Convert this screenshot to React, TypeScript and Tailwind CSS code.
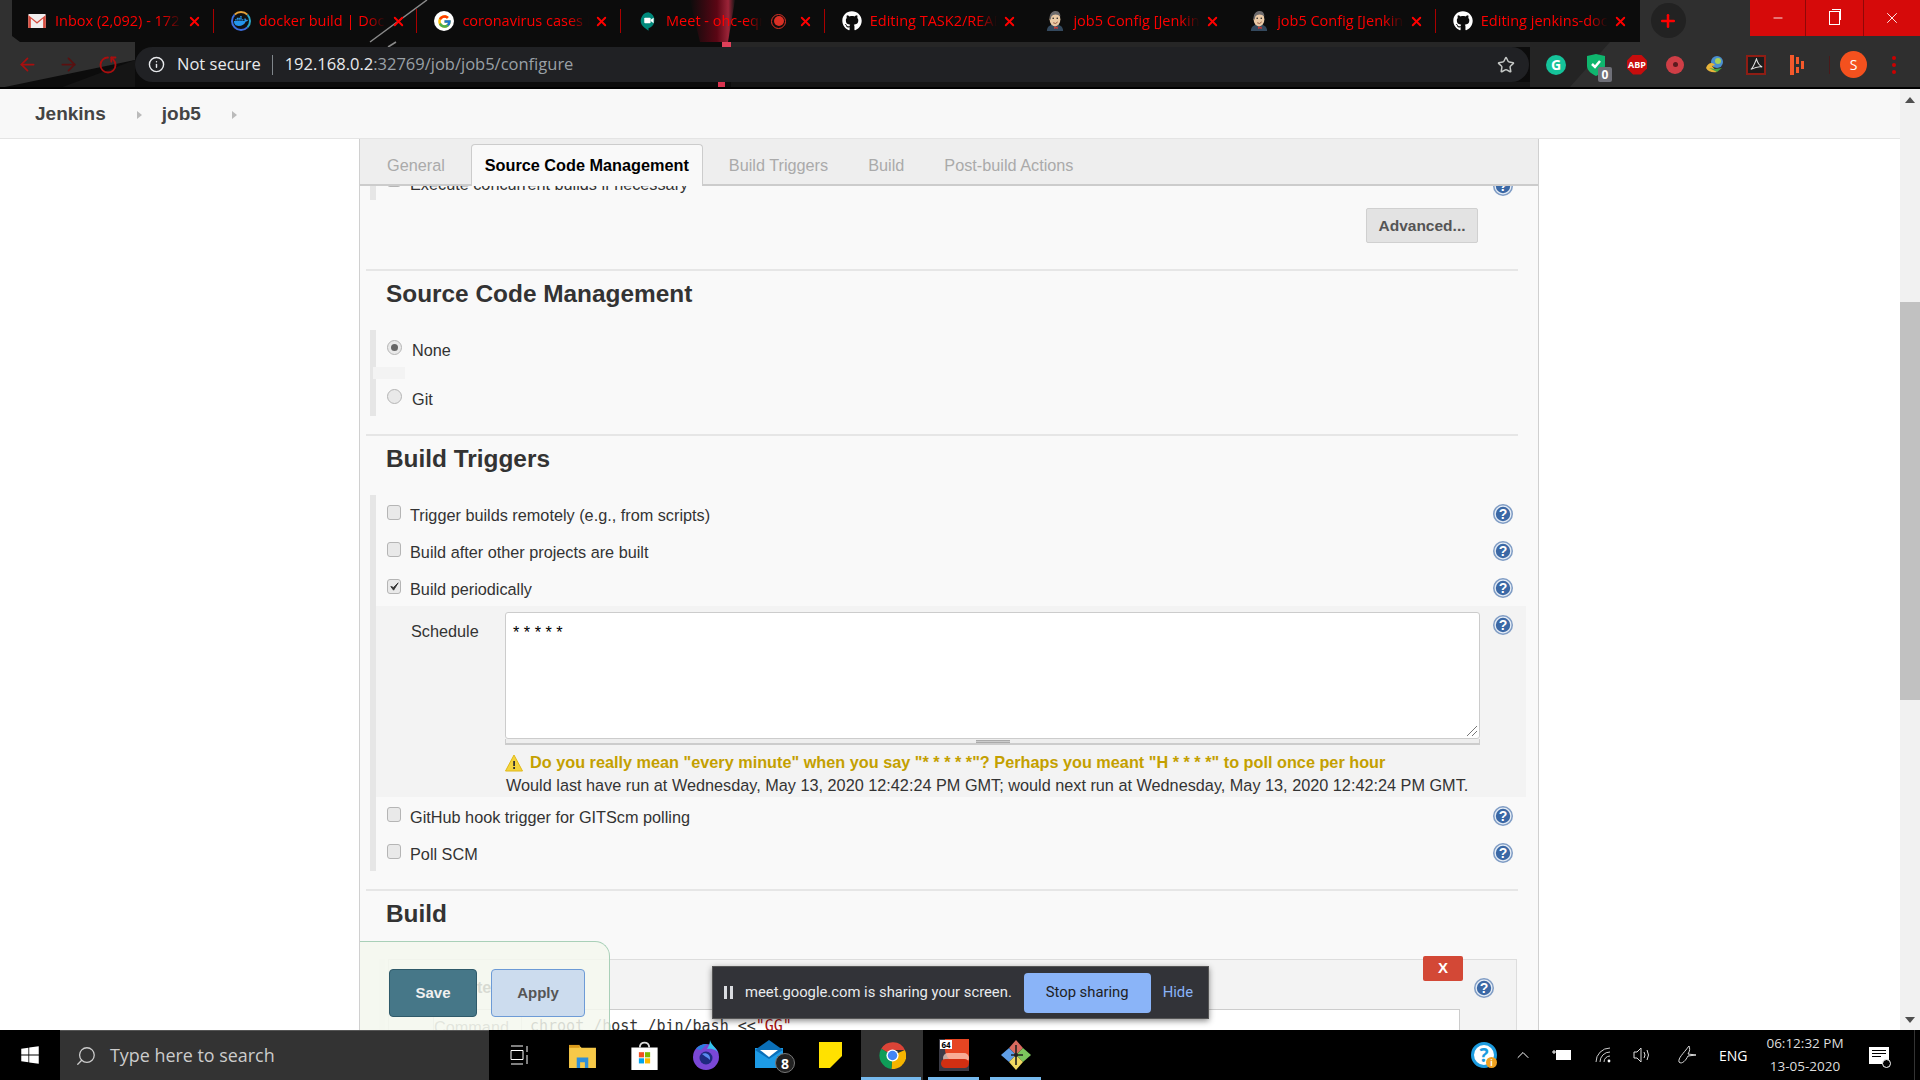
import React from 'react'
import { FaGithub, FaDocker, FaWindows } from 'react-icons/fa'
import { FcGoogle } from 'react-icons/fc'
import { ArrowLeft, ArrowRight, RotateCw, Info, Star, Search, ChevronUp, Plus, Minus, X } from 'lucide-react'

const Gmail = () => (
    <svg viewBox="0 0 20 16" className="w-[18px] h-[14px]">
        <rect x="0" y="0" width="20" height="16" rx="1" fill="#f1eeee" />
        <path d="M0 1 L10 9 L20 1 V16 H17 V5 L10 11 L3 5 V16 H0 Z" fill="#d54c3f" />
    </svg>
)

const Docker = () => (
    <div className="w-[20px] h-[20px] rounded-full border-2 border-[#3d6fe0] border-t-[#e5a33a] border-r-[#2aa7c9] bg-[#111] flex items-center justify-center">
        <FaDocker className="text-[#2496ed] size-[14px]" />
    </div>
)

const Google = () => (
    <div className="w-[20px] h-[20px] rounded-full bg-white flex items-center justify-center">
        <FcGoogle className="size-[15px]" />
    </div>
)

const Meet = () => (
    <svg viewBox="0 0 20 22" className="w-[17px] h-[19px]">
        <path d="M10 0 A10 10 0 0 1 10 19 L10 22 L5 18 A10 10 0 0 1 10 0 Z" fill="#00897b" />
        <rect x="5" y="6.5" width="7.5" height="6.5" rx="1" fill="#fff" />
        <path d="M12.5 9 L16 6.5 V13 L12.5 10.5 Z" fill="#fff" />
    </svg>
)

const JenkinsFace = () => (
    <svg viewBox="0 0 20 22" className="w-[18px] h-[20px]">
        <path d="M1 22 C1 17 5 15 10 15 C15 15 19 17 19 22 Z" fill="#34495e" />
        <ellipse cx="10" cy="9" rx="6" ry="8" fill="#eac9a5" />
        <path d="M4 8 C4 2 8 0 11 0 C15 0 16 4 16 6 C13 3 8 3 6 6 L5 10 Z" fill="#6d6b6d" />
        <circle cx="8" cy="8" r="0.9" fill="#222" />
        <circle cx="12.5" cy="8" r="0.9" fill="#222" />
        <path d="M8 13 Q11 15 13 12" stroke="#8a4b36" strokeWidth="1" fill="none" />
        <path d="M9 17 L11 18 L13 17 V20 L11 19 L9 20 Z" fill="#d33833" />
    </svg>
)

const tabs = [
    { title: 'Inbox (2,092) - 172', icon: <Gmail />, sep: true },
    { title: 'docker build | Docker', icon: <Docker />, sep: true },
    { title: 'coronavirus cases in', icon: <Google />, sep: true },
    { title: 'Meet - ohc-eqnx', icon: <Meet />, sep: true, rec: true },
    { title: 'Editing TASK2/README', icon: <FaGithub className="text-white size-[20px]" />, sep: false },
    { title: 'job5 Config [Jenkins]', icon: <JenkinsFace />, sep: false },
    { title: 'job5 Config [Jenkins]', icon: <JenkinsFace />, sep: true },
    { title: 'Editing jenkins-docker', icon: <FaGithub className="text-white size-[20px]" />, sep: false },
]

const Theme = () => (
    <svg viewBox="0 0 1920 89" className="absolute inset-0 w-[1920px] h-[89px]">
        <defs>
            <linearGradient id="streak" x1="0" x2="1" y1="0" y2="0">
                <stop offset="0" stopColor="#0c0c0c" />
                <stop offset="0.6" stopColor="#5a0614" />
                <stop offset="0.85" stopColor="#9c2438" />
                <stop offset="1" stopColor="#141414" />
            </linearGradient>
        </defs>
        <rect width="1920" height="89" fill="#0c0c0c" />
        <polygon points="0,0 12,0 12,36 20,42 135,42 135,60 0,88" fill="#303030" />
        <polygon points="60,88 135,60 135,88" fill="#151515" />
        <polygon points="690,0 735,0 728,42 700,42" fill="url(#streak)" />
        <rect x="722" y="42" width="9" height="5" fill="#e0405a" />
        <rect x="718" y="82" width="7" height="5" fill="#d8334f" />
        <rect x="731" y="42" width="800" height="5" fill="#262626" />
        <rect x="731" y="82" width="800" height="5" fill="#151515" />
        <line x1="427" y1="0" x2="370" y2="42" stroke="#8a8a8a" strokeWidth="1.5" />
        <line x1="396" y1="42" x2="388" y2="47" stroke="#8a8a8a" strokeWidth="1.5" />
        <polygon points="1640,0 1920,0 1920,87 1530,87 1530,42 1640,42" fill="#2f2f2f" />
        <polygon points="1530,42 1610,42 1570,87 1530,87" fill="#242424" />
        <rect y="87" width="1920" height="2" fill="#000" />
    </svg>
)

const Tab = ({ t }: { t: (typeof tabs)[number] }) => (
    <div className="w-[203.7px] h-[42px] shrink-0 flex items-center pl-[17px] relative">
        <div className="w-[20px] flex justify-center shrink-0">{t.icon}</div>
        <span className={`ml-[8px] whitespace-nowrap overflow-hidden text-[14.5px] text-[#f00] [mask-image:linear-gradient(to_right,black_84%,transparent)] ${t.rec ? 'w-[96px]' : 'w-[127px]'}`}>
            {t.title}
        </span>
        {t.rec && (
            <span className="absolute left-[150px] w-[15px] h-[15px] rounded-full border border-[#d93025] flex items-center justify-center">
                <span className="w-[10px] h-[10px] rounded-full bg-[#d93025]" />
            </span>
        )}
        <X className="absolute left-[177px] size-[15px] text-[#f00]" strokeWidth={3} />
        {t.sep && <div className="absolute right-0 top-[9px] h-[24px] w-px bg-[#a00]" />}
    </div>
)

const ToolIcons = () => (
    <div className="flex items-center h-full">
        <div className="w-[20px] h-[20px] rounded-full bg-[#15c39a] text-white text-[14px] font-bold flex items-center justify-center ml-[17px]">G</div>
        <div className="relative ml-[20px] w-[20px] h-[22px]">
            <svg viewBox="0 0 20 22" className="size-full">
                <path d="M1 2 L10 0 L19 2 V12 C19 17 14 20 10 22 C6 20 1 17 1 12 Z" fill="#0fb66e" />
                <path d="M6 10 L9 13 L14 7" stroke="#fff" strokeWidth="2.5" fill="none" />
            </svg>
            <span className="absolute left-[12px] top-[13px] w-[14px] h-[15px] rounded-[2px] bg-[#6f7078] text-white text-[12px] font-bold leading-[15px] text-center">0</span>
        </div>
        <div className="ml-[21px] w-[20px] h-[20px] bg-[#c70d0d] [clip-path:polygon(30%_0,70%_0,100%_30%,100%_70%,70%_100%,30%_100%,0_70%,0_30%)] text-white text-[9px] font-bold flex items-center justify-center">ABP</div>
        <div className="ml-[19px] w-[18px] h-[18px] rounded-full bg-[#cf3e46] flex items-center justify-center">
            <span className="w-[5px] h-[5px] rounded-full bg-[#5c1a1e]" />
        </div>
        <svg viewBox="0 0 20 20" className="ml-[21px] w-[20px] h-[20px]">
            <circle cx="12" cy="7" r="6" fill="#4a8fd0" />
            <circle cx="13" cy="6" r="3" fill="#a6d05a" />
            <path d="M1 13 C3 7 8 7 10 10 L7 11 L12 17 C8 18 3 17 1 13 Z" fill="#e8b43a" />
            <path d="M4 13 L12 17 L17 13 L10 14 Z" fill="#4aa544" />
        </svg>
        <div className="ml-[21px] w-[20px] h-[20px] bg-[#1d1d1d] border-2 border-[#8f1d14] flex items-center justify-center">
            <svg viewBox="0 0 16 16" className="size-[13px]">
                <path d="M8 1 C6 6 4 12 1 14 C5 12 11 10 15 11 C11 9 9 5 8 1 Z" stroke="#ddd" strokeWidth="1.3" fill="none" />
            </svg>
        </div>
        <svg viewBox="0 0 14 20" className="ml-[24px] w-[14px] h-[20px]">
            <rect x="0" y="0" width="4" height="20" fill="#f4592b" />
            <rect x="6" y="2" width="3" height="7" fill="#f4592b" />
            <rect x="6" y="12" width="3" height="6" fill="#f4592b" />
            <rect x="11" y="6" width="3" height="8" fill="#f4592b" />
        </svg>
        <div className="ml-[25px] w-px h-[18px] bg-[#4a1a1a]" />
        <div className="ml-[10px] w-[27px] h-[27px] rounded-full bg-[#f4511e] text-white text-[14px] flex items-center justify-center">S</div>
        <div className="ml-[25px] flex flex-col gap-[3px]">
            <span className="w-[4px] h-[4px] rounded-full bg-[#c00]" />
            <span className="w-[4px] h-[4px] rounded-full bg-[#c00]" />
            <span className="w-[4px] h-[4px] rounded-full bg-[#c00]" />
        </div>
    </div>
)

const BrowserChrome = () => (
    <header className="relative h-[89px] shrink-0 overflow-hidden font-['Open_Sans',sans-serif]">
        <Theme />
        <div className="relative flex h-[42px] pl-[10px]">
            {tabs.map((t, i) => <Tab key={i} t={t} />)}
            <div className="ml-[11px] mt-[3px] w-[35px] h-[35px] rounded-full bg-[#222] flex items-center justify-center">
                <Plus className="size-[20px] text-[#f00]" strokeWidth={3} />
            </div>
            <div className="ml-auto flex h-[36px] bg-[#d60a0a] text-white">
                <div className="w-[56px] flex items-center justify-center border-r border-[#8f0808]"><Minus className="size-[14px]" strokeWidth={1.5} /></div>
                <div className="w-[58px] flex items-center justify-center border-r border-[#8f0808]">
                    <div className="w-[11px] h-[14px] border border-white relative">
                        <div className="absolute left-[2px] top-[-3px] w-[9px] h-[11px] border-t border-r border-white" />
                    </div>
                </div>
                <div className="w-[56px] flex items-center justify-center"><X className="size-[18px]" strokeWidth={1.2} /></div>
            </div>
        </div>
        <div className="relative flex h-[45px] items-center">
            <ArrowLeft className="ml-[17px] size-[21px] text-[#a80f0f]" strokeWidth={2} />
            <ArrowRight className="ml-[20px] size-[21px] text-[#5a1010]" strokeWidth={2} />
            <RotateCw className="ml-[19px] size-[20px] text-[#a80f0f] scale-x-[-1] rotate-90" strokeWidth={2.2} />
            <div className="ml-[17px] w-[1394px] h-[35px] rounded-full bg-[#202124] flex items-center text-[16.5px]">
                <Info className="ml-[13px] size-[17px] text-[#e8eaed]" strokeWidth={2} />
                <span className="ml-[12px] text-[#e8eaed]">Not secure</span>
                <div className="ml-[11px] w-px h-[20px] bg-[#80868b]" />
                <span className="ml-[12px] text-[#e8eaed]">192.168.0.2</span>
                <span className="text-[#9aa0a6]">:32769/job/job5/configure</span>
                <Star className="ml-auto mr-[14px] size-[18px] text-[#c4c7c5]" strokeWidth={2} />
            </div>
            <ToolIcons />
        </div>
    </header>
)

const Breadcrumbs = () => (
    <div className="h-[50px] shrink-0 bg-[#f8f8f8] border-b border-[#e4e4e4] flex items-center pl-[35px] pt-[2px] text-[19px] font-bold text-[#444]">
        <span>Jenkins</span>
        <span className="ml-[31px] w-0 h-0 border-y-[4px] border-y-transparent border-l-[5px] border-l-[#bbb]" />
        <span className="ml-[20px]">job5</span>
        <span className="ml-[31px] w-0 h-0 border-y-[4px] border-y-transparent border-l-[5px] border-l-[#bbb]" />
    </div>
)

const Help = ({ className }: { className?: string }) => (
    <svg viewBox="0 0 20 20" className={`w-[20px] h-[20px] shrink-0 ${className ?? ''}`}>
        <circle cx="10" cy="10" r="10" fill="#7f9cc4" />
        <circle cx="10" cy="10" r="8.5" fill="#e6edf6" />
        <circle cx="10" cy="10" r="7.2" fill="#3b68a5" />
        <text x="10" y="15" textAnchor="middle" fontSize="14" fontWeight="bold" fill="#fff" fontFamily="Liberation Sans">?</text>
    </svg>
)

const Check = ({ checked }: { checked?: boolean }) => (
    <span className="w-[14px] h-[15px] shrink-0 rounded-[3px] border border-[#b5b5b5] bg-[#e9e9e9] flex items-center justify-center mb-[3px]">
        {checked && (
            <svg viewBox="0 0 12 12" className="size-[11px]">
                <path d="M2 6 L5 10 L10 2 L5 7 Z" fill="#333" stroke="#333" strokeWidth="1" />
            </svg>
        )}
    </span>
)

const Radio = ({ checked }: { checked?: boolean }) => (
    <span className="w-[15px] h-[15px] shrink-0 rounded-full border border-[#b5b5b5] bg-[#e9e9e9] flex items-center justify-center mb-[3px]">
        {checked && <span className="w-[7px] h-[7px] rounded-full bg-[#666]" />}
    </span>
)

const CheckRow = ({ label, checked }: { label: string; checked?: boolean }) => (
    <div className="h-[37px] pl-[11px] pr-[13px] flex items-center">
        <Check checked={checked} />
        <span className="ml-[9px] mt-[4px]">{label}</span>
        <Help className="ml-auto" />
    </div>
)

const Divider = ({ className }: { className: string }) => (
    <div className={`ml-[6px] w-[1152px] h-[2px] bg-[#e6e6e6] ${className}`} />
)

const Heading = ({ children }: { children: string }) => (
    <h2 className="h-[46px] pl-[26px] flex items-center text-[24.4px] font-bold text-[#333]">{children}</h2>
)

const Schedule = () => (
    <div className="h-[191px] bg-[#f3f3f3] flex pt-[6px] pr-[13px]">
        <span className="w-[129px] pl-[35px] pt-[7px] shrink-0">Schedule</span>
        <div className="w-[975px] shrink-0">
            <div className="relative h-[127px] bg-white border border-[#ccc] rounded-[3px] pl-[7px] pt-[7px] text-black">* * * * *
                <svg viewBox="0 0 12 12" className="absolute right-[1px] bottom-[1px] size-[12px]">
                    <path d="M1 11 L11 1 M6 11 L11 6" stroke="#777" strokeWidth="1" />
                </svg>
            </div>
            <div className="h-[6px] bg-[#eee] border-b-2 border-x border-[#ccc] flex justify-center">
                <div className="w-[34px] h-[3px] mt-px border-y border-[#aaa] bg-[#ccc]" />
            </div>
            <div className="mt-[6px] h-[23px] flex items-center font-bold text-[#c4a000]">
                <svg viewBox="0 0 18 18" className="w-[18px] h-[18px] shrink-0">
                    <path d="M9 1 L17.5 17 H0.5 Z" fill="#f4d43c" stroke="#e0b818" strokeWidth="1" strokeLinejoin="round" />
                    <rect x="8.2" y="7" width="1.8" height="5" fill="#333" />
                    <rect x="8.2" y="13" width="1.8" height="2" fill="#333" />
                </svg>
                <span className="ml-[7px]">Do you really mean "every minute" when you say "* * * * *"? Perhaps you meant "H * * * *" to poll once per hour</span>
            </div>
            <div className="h-[23px] pl-px flex items-center whitespace-nowrap">
                Would last have run at Wednesday, May 13, 2020 12:42:24 PM GMT; would next run at Wednesday, May 13, 2020 12:42:24 PM GMT.
            </div>
        </div>
        <Help className="ml-auto mt-[3px]" />
    </div>
)

const BuildStep = () => (
    <div className="mt-[22px] ml-[19px] flex">
        <div className="w-[6px] h-[80px] bg-[#eee] shrink-0" />
        <div className="relative ml-[3px] w-[1129px] h-[80px] bg-[#f3f3f3] border border-[#ddd]">
            <div className="pl-[40px] pt-[15px] h-[49px] font-bold text-[#333]">Execute shell</div>
            <div className="ml-[44px] w-[1027px] h-[40px] bg-white border border-[#ccc] flex items-start pt-[5px]">
                <span className="w-[87px] shrink-0 text-[#777]">Command</span>
                <span className="h-full -mt-[5px] pt-[5px] pl-[8px] border-l border-[#ddd] font-['DejaVu_Sans_Mono',monospace] text-[15px] whitespace-nowrap text-[#333]">
                    chroot /host /bin/bash &lt;&lt;<span className="text-[#a11]">"GG"</span>
                </span>
            </div>
            <button className="absolute left-[1034px] top-[-4px] w-[40px] h-[25px] rounded-[2px] bg-[#d34836] text-white font-bold text-[15px]">X</button>
            <Help className="absolute left-[1085px] top-[18px]" />
        </div>
    </div>
)

const Panel = () => (
    <section className="w-[1180px] h-[891px] shrink-0 border-x border-[#d0d0d0] bg-[#f9f9f9] overflow-hidden text-[16.25px] text-[#333]">
        <div className="relative z-10 h-[47px] bg-[#eee] border-b-2 border-[#ccc] flex items-end pl-[27px] text-[#aaa]">
            <span className="h-[45px] pt-[7px] flex items-center">General</span>
            <span className="ml-[26px] w-[232px] h-[42px] mb-[-2px] flex items-center justify-center rounded-t-[4px] bg-[#f9f9f9] border border-b-0 border-[#ccc] font-bold text-black">Source Code Management</span>
            <span className="ml-[26px] h-[45px] pt-[7px] flex items-center">Build Triggers</span>
            <span className="ml-[40px] h-[45px] pt-[7px] flex items-center">Build</span>
            <span className="ml-[40px] h-[45px] pt-[7px] flex items-center">Post-build Actions</span>
        </div>
        <div className="ml-[10px] w-[1156px] h-[14px] border-l-[6px] border-[#e6e6e6] pl-[11px] pr-[13px] flex">
            <div className="flex h-[37px] -mt-[14px] items-start">
                <Check />
                <span className="ml-[9px]">Execute concurrent builds if necessary</span>
            </div>
            <Help className="ml-auto -mt-[10px]" />
        </div>
        <div className="mt-[8px] ml-[1006px] w-[112px] h-[35px] rounded-[2px] bg-[#e3e3e3] border border-[#d0d0d0] flex items-center justify-center font-bold text-[15.5px] text-[#555]">Advanced...</div>
        <Divider className="mt-[26px]" />
        <Heading>Source Code Management</Heading>
        <div className="mt-[13px] ml-[10px] w-[1156px] border-l-[6px] border-[#e6e6e6]">
            <div className="h-[37px] pl-[11px] flex items-center">
                <Radio checked />
                <span className="ml-[10px] mt-[4px]">None</span>
            </div>
            <div className="h-[12px] w-[32px] -ml-[3px] bg-[#f3f3f3]" />
            <div className="h-[37px] pl-[11px] flex items-center">
                <Radio />
                <span className="ml-[10px] mt-[4px]">Git</span>
            </div>
        </div>
        <Divider className="mt-[18px]" />
        <Heading>Build Triggers</Heading>
        <div className="mt-[13px] ml-[10px] w-[1156px] border-l-[6px] border-[#e6e6e6]">
            <CheckRow label="Trigger builds remotely (e.g., from scripts)" />
            <CheckRow label="Build after other projects are built" />
            <CheckRow label="Build periodically" checked />
            <Schedule />
            <CheckRow label="GitHub hook trigger for GITScm polling" />
            <CheckRow label="Poll SCM" />
        </div>
        <Divider className="mt-[18px]" />
        <Heading>Build</Heading>
        <BuildStep />
    </section>
)

const SaveBar = () => (
    <div className="absolute left-[360px] bottom-0 w-[250px] h-[89px] z-20 rounded-tr-[15px] border-t border-r border-[#a9d0b8] bg-[#f4f8ee]/85 flex items-start pt-[27px] pl-[29px] gap-[14px] font-bold text-[15px]">
        <button className="w-[88px] h-[48px] rounded-[4px] bg-[#467788] border border-[#2f5a6a] text-[#f0f0f0]">Save</button>
        <button className="w-[94px] h-[48px] rounded-[4px] bg-[#ccdcee] border border-[#6d9bd6] text-[#555]">Apply</button>
    </div>
)

const SharingBar = () => (
    <div className="absolute left-[712px] top-[827px] w-[497px] h-[53px] z-20 bg-[#323338] shadow-[0_2px_6px_rgba(0,0,0,0.45)] border border-[#555] flex items-center font-['Roboto',sans-serif] text-[14.8px] text-[#e8eaed]">
        <span className="ml-[11px] w-[3px] h-[13px] bg-[#dadce0]" />
        <span className="ml-[3px] w-[3px] h-[13px] bg-[#dadce0]" />
        <span className="ml-[12px]">meet.google.com is sharing your screen.</span>
        <span className="ml-auto w-[127px] h-[40px] rounded-[4px] bg-[#8ab4f8] text-[#202124] flex items-center justify-center">Stop sharing</span>
        <span className="ml-[12px] mr-[15px] text-[#8ab4f8]">Hide</span>
    </div>
)

const Scrollbar = () => (
    <div className="w-[20px] h-full bg-[#f1f1f1] shrink-0 flex flex-col items-center">
        <span className="mt-[8px] w-0 h-0 border-x-[5px] border-x-transparent border-b-[6px] border-b-[#505050]" />
        <div className="mt-[199px] w-full h-[398px] bg-[#c1c1c1]" />
        <span className="mt-auto mb-[7px] w-0 h-0 border-x-[5px] border-x-transparent border-t-[6px] border-t-[#505050]" />
    </div>
)

const Chrome = () => (
    <svg viewBox="0 0 24 24" className="w-[27px] h-[27px]">
        <path d="M12 12 L2 6 A12 12 0 0 1 23 7 H12 Z" fill="#db4437" />
        <path d="M12 12 L23 7 A12 12 0 0 1 11 24 Z" fill="#f4b400" />
        <path d="M12 12 L11 24 A12 12 0 0 1 2 6 Z" fill="#0f9d58" />
        <circle cx="12" cy="12" r="5.4" fill="#fff" />
        <circle cx="12" cy="12" r="4.2" fill="#4285f4" />
    </svg>
)

const TaskCell = ({ children, active, underline }: { children: React.ReactNode; active?: boolean; underline?: boolean }) => (
    <div className={`relative w-[62px] h-full shrink-0 flex items-center justify-center ${active ? 'bg-[#333]' : ''}`}>
        {children}
        {underline && <div className={`absolute bottom-0 h-[3px] bg-[#76b9ed] ${active ? 'left-0 w-[60px]' : 'left-[5px] w-[51px]'}`} />}
    </div>
)

const Taskbar = () => (
    <footer className="h-[50px] shrink-0 bg-black flex items-center font-['Open_Sans',sans-serif] text-white relative z-30">
        <div className="w-[60px] h-full flex items-center justify-center">
            <FaWindows className="size-[20px]" />
        </div>
        <div className="w-[429px] h-full bg-[#333] border-t border-[#555] flex items-center pl-[15px] text-[#ccc]">
            <Search className="size-[22px] scale-x-[-1]" strokeWidth={1.4} />
            <span className="ml-[13px] text-[17.9px]">Type here to search</span>
        </div>
        <TaskCell>
            <svg viewBox="0 0 20 20" className="size-[20px]" stroke="#fff" fill="none">
                <path d="M1 1 H13 M1 5.5 V14.5 H13 V5.5 Z M1 19 H13 M17 1 V7 M17 10 V19" />
            </svg>
        </TaskCell>
        <TaskCell>
            <svg viewBox="0 0 28 26" className="w-[27px] h-[25px]">
                <path d="M0 2 H10 L13 5 H28 V26 H0 Z" fill="#f7c948" />
                <rect y="2" width="11" height="3" fill="#d99a1c" />
                <path d="M8 26 V15 H20 V26 H16.5 V20 H11.5 V26 Z" fill="#2f8fd8" />
            </svg>
        </TaskCell>
        <TaskCell>
            <svg viewBox="0 0 28 32" className="w-[27px] h-[30px]">
                <path d="M0 8 H28 V32 H0 Z" fill="#fff" />
                <path d="M9 8 C9 1 19 1 19 8" stroke="#ddd" strokeWidth="2" fill="none" />
                <rect x="8" y="13" width="5.5" height="5.5" fill="#f25022" />
                <rect x="14.5" y="13" width="5.5" height="5.5" fill="#7fba00" />
                <rect x="8" y="19.5" width="5.5" height="5.5" fill="#00a4ef" />
                <rect x="14.5" y="19.5" width="5.5" height="5.5" fill="#ffb900" />
            </svg>
        </TaskCell>
        <TaskCell>
            <svg viewBox="0 0 28 30" className="w-[28px] h-[30px]">
                <circle cx="14" cy="17" r="13" fill="#7a47d6" />
                <path d="M18 0 C19 5 25 8 27 15 C26 10 20 8 15 9 C17 6 18 3 18 0 Z" fill="#35c5ef" />
                <path d="M4 9 C8 4 13 4 15 4 L9 10 Z" fill="#2a7fe0" />
                <circle cx="14" cy="18" r="6.5" fill="#1f2a80" />
                <path d="M10 14 C14 12 19 15 18 20 C15 17 12 16 10 14 Z" fill="#5a8cf0" />
            </svg>
        </TaskCell>
        <TaskCell>
            <div className="relative ml-[14px] w-[40px] h-[30px]">
                <svg viewBox="0 0 28 28" className="w-[28px] h-[28px]">
                    <rect y="8" width="28" height="20" fill="#1d9be6" />
                    <path d="M0 10 L14 0 L28 10 L14 19 Z" fill="#0a6fb8" />
                    <path d="M5 10 H23 L14 17 Z" fill="#fff" />
                </svg>
                <span className="absolute right-0 bottom-[-3px] w-[20px] h-[20px] rounded-full bg-[#222] border border-[#777] text-[14px] font-bold flex items-center justify-center">8</span>
            </div>
        </TaskCell>
        <TaskCell>
            <div className="w-[23px] h-[26px] bg-[#ffe100] relative">
                <div className="absolute right-0 bottom-0 w-0 h-0 border-l-[12px] border-l-transparent border-b-[12px] border-b-black" />
            </div>
        </TaskCell>
        <TaskCell active underline><Chrome /></TaskCell>
        <TaskCell underline>
            <div className="relative w-[30px] h-[32px] bg-[#3b3b46] overflow-hidden">
                <div className="absolute right-0 top-0 w-[24px] h-[24px] rounded-bl-[14px] bg-[#e64522]" />
                <div className="absolute left-[4px] top-[14px] w-[26px] h-[10px] rounded-full bg-[#ffd9c7]/70" />
                <div className="absolute left-[2px] top-[20px] w-[28px] h-[9px] rounded-full bg-[#d22f12]" />
                <span className="absolute left-[1px] top-[1px] w-[12px] h-[9px] bg-white text-black text-[8px] font-bold leading-[9px] text-center">64</span>
            </div>
        </TaskCell>
        <TaskCell underline>
            <svg viewBox="0 0 30 30" className="w-[30px] h-[30px]">
                <path d="M15 0 L22 8 L15 15 L8 8 Z" fill="#d96a5e" />
                <path d="M8 8 L15 15 L8 22 L0 15 Z" fill="#5f9ee6" />
                <path d="M22 8 L30 15 L22 22 L15 15 Z" fill="#7cc75e" />
                <path d="M8 22 L15 15 L22 22 L15 30 Z" fill="#f0d860" />
                <path d="M15 5 V25 M10 15 H22" stroke="#222" strokeWidth="1.6" />
                <circle cx="15" cy="15" r="2" fill="#222" />
            </svg>
        </TaskCell>
        <div className="ml-auto flex items-center h-full">
            <div className="relative w-[26px] h-[26px] rounded-full bg-white border-[3px] border-[#1c9ce0] flex items-center justify-center text-[#1c9ce0] text-[19px] font-bold leading-none">
                ?
                <span className="absolute right-[-3px] bottom-[-3px] w-[11px] h-[11px] rounded-full bg-[#f0a020] text-white text-[8px] flex items-center justify-center">i</span>
            </div>
            <ChevronUp className="ml-[16px] size-[20px]" strokeWidth={1.2} />
            <svg viewBox="0 0 20 12" className="ml-[19px] w-[20px] h-[12px]" fill="none" stroke="#fff">
                <rect x="4.5" y="1.5" width="14" height="9" fill="#fff" />
                <path d="M0 3 H4 M2 1 V5" />
            </svg>
            <svg viewBox="0 0 16 16" className="ml-[23px] size-[16px]" fill="none" stroke="#ccc">
                <path d="M1 15 A14 14 0 0 1 15 1 M5 15 A10 10 0 0 1 15 5 M9 15 A6 6 0 0 1 15 9" />
                <circle cx="14" cy="14" r="1.4" fill="#fff" stroke="none" />
            </svg>
            <svg viewBox="0 0 20 16" className="ml-[22px] w-[20px] h-[16px]" fill="none" stroke="#ddd">
                <path d="M1 5 H4 L8 1 V15 L4 11 H1 Z M11 5 Q13 8 11 11 M14 3 Q17 8 14 13" />
            </svg>
            <svg viewBox="0 0 20 20" className="ml-[24px] size-[20px]" fill="none" stroke="#ddd">
                <path d="M2 17 C1 13 6 9 12 1 C13 3 13 6 11 9 L19 10 L11 11 C9 15 5 20 2 17 Z" />
            </svg>
            <span className="ml-[22px] text-[14px] w-[30px]">ENG</span>
            <div className="ml-[16px] w-[80px] flex flex-col items-center text-[13.5px] leading-[23px] text-[#ddd]">
                <span>06:12:32 PM</span>
                <span>13-05-2020</span>
            </div>
            <div className="relative ml-[24px] w-[20px] h-[17px] bg-white flex flex-col gap-[2px] pl-[3px] pt-[3px]">
                <span className="w-[14px] h-px bg-black" />
                <span className="w-[14px] h-px bg-black" />
                <span className="w-[9px] h-px bg-black" />
                <span className="absolute right-[-2px] bottom-[-4px] w-[9px] h-[9px] rounded-full bg-black border border-white" />
            </div>
            <div className="ml-[25px] mr-[5px] w-px h-full bg-[#333]" />
        </div>
    </footer>
)

export default function App() {
    return (
        <div className="w-[1920px] h-[1080px] overflow-hidden flex flex-col bg-white font-['Liberation_Sans',Arial,sans-serif]">
            <BrowserChrome />
            <div className="flex flex-1 min-h-0">
                <div className="w-[1900px] shrink-0 flex flex-col">
                    <Breadcrumbs />
                    <main className="relative flex flex-1 overflow-hidden bg-white">
                        <div className="w-[359px] shrink-0" />
                        <Panel />
                        <SaveBar />
                        <SharingBar />
                    </main>
                </div>
                <Scrollbar />
            </div>
            <Taskbar />
        </div>
    )
}
